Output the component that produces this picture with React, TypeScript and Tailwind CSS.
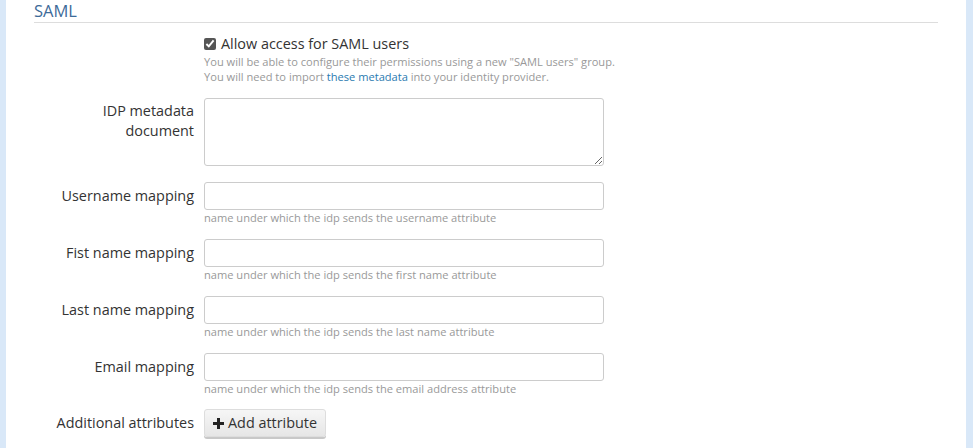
import React from "react";

const fields = [
  { label: "Username mapping", help: "name under which the idp sends the username attribute" },
  { label: "Fist name mapping", help: "name under which the idp sends the first name attribute" },
  { label: "Last name mapping", help: "name under which the idp sends the last name attribute" },
  { label: "Email mapping", help: "name under which the idp sends the email address attribute" },
];

export default function App() {
  return (
    <div
      className="flex h-[448px] w-[973px] bg-[#d9e8f8] overflow-hidden"
      style={{ fontFamily: '"Open Sans", sans-serif' }}
    >
      <div className="ml-[6px] w-[960px] bg-white px-[28px] text-[#333]">
        <div className="border-b border-[#dddddd] h-[23px] text-[16.5px] leading-[22px] text-[#3d6b99]">
          SAML
        </div>

        <div className="flex mt-[12px]">
          <div className="w-[160px] shrink-0" />
          <div className="ml-[10px]">
            <label className="flex items-center h-[18px] text-[14.4px]">
              <input type="checkbox" defaultChecked className="m-0 w-[12px] h-[12px] mr-[5px] accent-[#555]" />
              Allow access for SAML users
            </label>
            <div className="text-[11.1px] leading-[15px] text-[#999] mt-[1px]">
              You will be able to configure their permissions using a new "SAML users" group.
            </div>
            <div className="text-[11.1px] leading-[15px] text-[#999]">
              You will need to import <a className="text-[#2a7ab0]">these metadata</a> into your identity provider.
            </div>
          </div>
        </div>

        <div className="flex mt-[14px]">
          <div className="w-[160px] shrink-0 text-right text-[14.4px] leading-[20px] pt-[3px]">
            IDP metadata
            <br />
            document
          </div>
          <textarea className="ml-[10px] w-[400px] h-[68px] border border-[#ccc] rounded-[3px] block resize-y" />
        </div>

        {fields.map((f, i) => (
          <div key={i} className={`flex ${i === 0 ? "mt-[16px]" : "mt-[13px]"}`}>
            <div className="w-[160px] shrink-0 text-right text-[14.4px] leading-[28px]">{f.label}</div>
            <div className="ml-[10px]">
              <input type="text" className="block w-[400px] h-[28px] border border-[#ccc] rounded-[3px]" />
              <div className="text-[11.1px] leading-[16px] text-[#999]">{f.help}</div>
            </div>
          </div>
        ))}

        <div className="flex mt-[12px]">
          <div className="w-[160px] shrink-0 text-right text-[14.4px] leading-[28px]">Additional attributes</div>
          <button className="ml-[10px] h-[28px] px-[8px] flex items-center gap-[4px] text-[14.4px] text-[#333] rounded-[3px] border border-[#ddd] bg-gradient-to-b from-[#f6f6f6] to-[#e6e6e6] shadow-[0_2px_0_#c8c8c8]">
            <svg width="11" height="11" viewBox="0 0 11 11">
              <path d="M4 0h3v4h4v3H7v4H4V7H0V4h4z" fill="#222" />
            </svg>
            Add attribute
          </button>
        </div>
      </div>
      <div className="flex-1" />
    </div>
  );
}
